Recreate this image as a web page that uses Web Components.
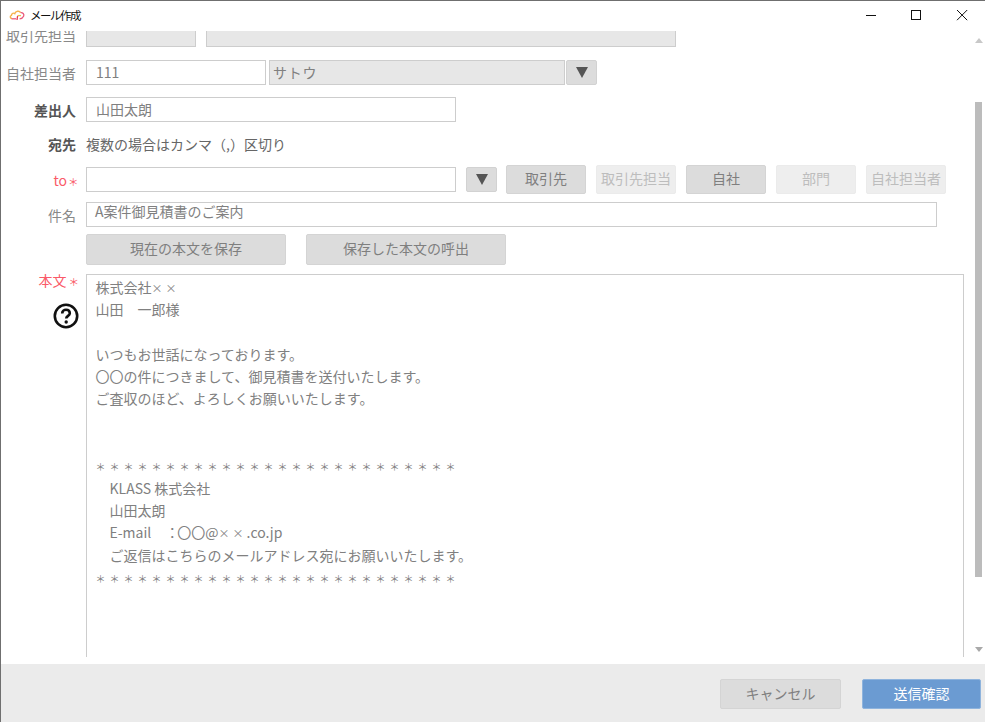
<!DOCTYPE html>
<html lang="ja">
<head>
<meta charset="utf-8">
<title>メール作成</title>
<style>
  html, body { margin: 0; height: 100%; overflow: hidden; }
  body {
    font-family: "Noto Sans CJK JP", "Noto Sans", sans-serif;
    font-size: 14px;
    color: #808080;
  }
  body-field div { min-height: 22.3px; }
  .stars { font-size: 10px; letter-spacing: 4px; line-height: 1; }
  .cross { font-size: 11px; letter-spacing: 3px; line-height: 1; }
  .colon { letter-spacing: -2px; }
  .req-mark { font-size: 10.5px; line-height: 1; margin-left: 1px; }
</style>
</head>
<body>
<mail-window>
  <title-bar slot="title">メール作成</title-bar>

  <form-row style="margin-top: -9px">
    <span slot="label">取引先担当</span>
    <text-field style="width: 110px" disabled></text-field>
    <text-field style="width: 470px; margin-left: 10px" disabled></text-field>
  </form-row>

  <form-row style="margin-top: 13px">
    <span slot="label">自社担当者</span>
    <text-field style="width: 180px">111</text-field>
    <text-field style="width: 296px; margin-left: 3px" disabled compact>サトウ</text-field>
    <drop-arrow style="margin-left: 1px"></drop-arrow>
  </form-row>

  <form-row style="margin-top: 12px">
    <span slot="label" style="font-weight: 700; color: #555">差出人</span>
    <text-field style="width: 370px">山田太朗</text-field>
  </form-row>

  <form-row style="margin-top: 12px; height: 22px">
    <span slot="label" style="display: block; margin-bottom: 2px; font-weight: 700; color: #555">宛先</span>
    <span style="color: #666; line-height: 20px; padding-bottom: 2px">複数の場合はカンマ（,）区切り</span>
  </form-row>

  <form-row style="margin-top: 9px">
    <span slot="label" style="color: #fa5a68; margin-right: -2.5px">to<span class="req-mark">＊</span></span>
    <text-field style="width: 370px"></text-field>
    <drop-arrow style="margin-left: 10px"></drop-arrow>
    <div style="display: flex; gap: 10px; margin-left: 9px">
      <flat-button style="width: 80px">取引先</flat-button>
      <flat-button style="width: 80px" disabled>取引先担当</flat-button>
      <flat-button style="width: 80px">自社</flat-button>
      <flat-button style="width: 80px" disabled>部門</flat-button>
      <flat-button style="width: 80px" disabled>自社担当者</flat-button>
    </div>
  </form-row>

  <form-row style="margin-top: 8px">
    <span slot="label">件名</span>
    <text-field style="width: 851px" top>A案件御見積書のご案内</text-field>
  </form-row>

  <form-row style="margin-top: 7px; height: 31px">
    <flat-button style="width: 200px; height: 31px">現在の本文を保存</flat-button>
    <flat-button style="width: 200px; height: 31px; margin-left: 20px">保存した本文の呼出</flat-button>
  </form-row>

  <body-field style="margin-top: 9px">
    <div>株式会社<span class="cross">××</span></div>
    <div>山田　一郎様</div>
    <div></div>
    <div>いつもお世話になっております。</div>
    <div>〇〇の件につきまして、御見積書を送付いたします。</div>
    <div>ご査収のほど、よろしくお願いいたします。</div>
    <div></div>
    <div></div>
    <div><span class="stars">＊＊＊＊＊＊＊＊＊＊＊＊＊＊＊＊＊＊＊＊＊＊＊＊＊＊</span></div>
    <div>　KLASS 株式会社</div>
    <div>　山田太朗</div>
    <div>　E-mail　<span class="colon">：</span>〇〇@<span class="cross">××</span>.co.jp</div>
    <div>　ご返信はこちらのメールアドレス宛にお願いいたします。</div>
    <div><span class="stars">＊＊＊＊＊＊＊＊＊＊＊＊＊＊＊＊＊＊＊＊＊＊＊＊＊＊</span></div>
  </body-field>

  <mail-footer slot="footer">
    <flat-button style="width: 121px; height: 30px">キャンセル</flat-button>
    <flat-button style="width: 119px; height: 30px" primary>送信確認</flat-button>
  </mail-footer>
</mail-window>

<script>
class MailWindow extends HTMLElement {
  connectedCallback() {
    this.attachShadow({ mode: 'open' });
    this.shadowRoot.innerHTML = `
      <style>
        :host {
          display: flex;
          flex-direction: column;
          box-sizing: border-box;
          width: 985px;
          height: 722px;
          background: #fff;
          border-top: 1px solid #6f6f6f;
          border-left: 1px solid #6f6f6f;
        }
        .middle { flex: 1; display: flex; min-height: 0; }
        .scroller { flex: 1; min-width: 0; overflow: hidden; }
        .rail {
          flex: none;
          width: 11px;
          margin-right: 1px;
          display: flex;
          flex-direction: column;
          align-items: center;
        }
        .thumb { width: 7px; height: 475px; margin-top: 59px; background: #bcbcbc; }
        .up, .down { width: 0; height: 0; border-left: 4px solid transparent; border-right: 4px solid transparent; }
        .up { margin-top: 7px; border-bottom: 5px solid #c8c8c8; }
        .down { margin-top: 70px; border-top: 5px solid #a9a9a9; }
      </style>
      <slot name="title"></slot>
      <div class="middle">
        <div class="scroller"><slot></slot></div>
        <div class="rail">
          <div class="up"></div>
          <div class="thumb"></div>
          <div class="down"></div>
        </div>
      </div>
      <slot name="footer"></slot>
    `;
  }
}

class TitleBar extends HTMLElement {
  connectedCallback() {
    this.attachShadow({ mode: 'open' });
    this.shadowRoot.innerHTML = `
      <style>
        :host {
          display: flex;
          align-items: center;
          flex: none;
          box-sizing: border-box;
          height: 30px;
          padding-bottom: 2px;
          font-size: 11.5px;
          color: #111;
        }
        .logo { margin: 0 4px 0 8px; }
        .name { flex: 1; letter-spacing: -1.5px; }
        .ctl { display: flex; margin-right: 17px; }
        .ctl svg { display: block; }
      </style>
      <svg class="logo" width="17" height="12" viewBox="0 0 17 12" fill="none">
        <path d="M3 9.5C1 9.5.6 7 2.4 6.4 2.6 4.4 4.6 3.6 5.8 4.6 6.6 2 10.4 1.4 11.6 3.6" stroke="#f6b24c" stroke-width="1.4"/>
        <path d="M2.6 9.8H7" stroke="#ea5a7c" stroke-width="1.3"/>
        <path d="M11.6 3.6C13.6 3.2 15.6 5.2 14.6 7.2 14 8.6 12.6 9.6 10.6 9.8" stroke="#ea5a7c" stroke-width="1.3"/>
        <path d="M8.4 6.6H12" stroke="#e8c24a" stroke-width="1.3"/>
        <path d="M8.6 7 8 11" stroke="#e8384f" stroke-width="1.3"/>
      </svg>
      <span class="name"><slot></slot></span>
      <div class="ctl">
        <svg width="12" height="12" viewBox="0 0 12 12"><path d="M1 6.5H11" stroke="#111" fill="none"/></svg>
        <svg width="12" height="12" viewBox="0 0 12 12" style="margin-left:33px"><rect x="1.5" y="1.5" width="9" height="9" stroke="#111" fill="none"/></svg>
        <svg width="12" height="12" viewBox="0 0 12 12" style="margin-left:34px"><path d="M1 1 11.2 11.2M11.2 1 1 11.2" stroke="#111" fill="none"/></svg>
      </div>
    `;
  }
}

class FormRow extends HTMLElement {
  connectedCallback() {
    this.attachShadow({ mode: 'open' });
    this.shadowRoot.innerHTML = `
      <style>
        :host { display: flex; align-items: center; }
        .label {
          flex: none;
          box-sizing: border-box;
          width: 85px;
          padding-right: 10px;
          text-align: right;
          white-space: nowrap;
          color: #888;
        }
        .fields { display: flex; align-items: center; }
      </style>
      <div class="label"><slot name="label"></slot></div>
      <div class="fields"><slot></slot></div>
    `;
  }
}

class TextField extends HTMLElement {
  connectedCallback() {
    this.attachShadow({ mode: 'open' });
    this.shadowRoot.innerHTML = `
      <style>
        :host {
          display: flex;
          align-items: center;
          flex: none;
          box-sizing: border-box;
          height: 25px;
          padding: 0 9px 1px;
          background: #fff;
          border: 1px solid #cdcdcd;
          color: #808080;
        }
        :host([disabled]) { background: #e7e7e7; }
        :host([compact]) { padding-left: 3px; letter-spacing: 0.8px; }
        :host([top]) { align-items: flex-start; line-height: 17px; padding-left: 8px; }
      </style>
      <slot></slot>
    `;
  }
}

class DropArrow extends HTMLElement {
  connectedCallback() {
    this.attachShadow({ mode: 'open' });
    this.shadowRoot.innerHTML = `
      <style>
        :host {
          display: flex;
          align-items: center;
          justify-content: center;
          flex: none;
          box-sizing: border-box;
          width: 31px;
          height: 25px;
          background: #dcdcdc;
          border: 1px solid #d2d2d2;
          border-radius: 2px;
        }
        i { width: 0; height: 0; border-left: 6px solid transparent; border-right: 6px solid transparent; border-top: 11px solid #555; }
      </style>
      <i></i>
    `;
  }
}

class FlatButton extends HTMLElement {
  connectedCallback() {
    this.attachShadow({ mode: 'open' });
    this.shadowRoot.innerHTML = `
      <style>
        :host {
          display: flex;
          align-items: center;
          justify-content: center;
          flex: none;
          box-sizing: border-box;
          height: 29px;
          padding-bottom: 3px;
          background: #dcdcdc;
          border: 1px solid #d4d4d4;
          border-radius: 2px;
          color: #7f7f7f;
          white-space: nowrap;
        }
        :host([disabled]) { background: #eeeeee; border-color: #ebebeb; color: #bdbdbd; }
        :host([primary]) { background: #6b9bd2; border-color: #8fb4dd; color: #fff; }
      </style>
      <slot></slot>
    `;
  }
}

class BodyField extends HTMLElement {
  connectedCallback() {
    this.attachShadow({ mode: 'open' });
    this.shadowRoot.innerHTML = `
      <style>
        :host { display: flex; align-items: flex-start; }
        .side {
          flex: none;
          box-sizing: border-box;
          width: 85px;
          padding-right: 7px;
          display: flex;
          flex-direction: column;
          align-items: flex-end;
        }
        .req { color: #fa5a68; line-height: 14px; margin-top: -1px; white-space: nowrap; }
        .req span { font-size: 10.5px; line-height: 1; margin-left: 2px; }
        .help { margin-top: 15px; display: block; }
        .box {
          box-sizing: border-box;
          width: 878px;
          height: 383px;
          padding: 1px 9px 0 8.5px;
          border: 1px solid #cdcdcd;
          border-bottom: 0;
          overflow: hidden;
          line-height: 22.3px;
          color: #808080;
        }
      </style>
      <div class="side">
        <span class="req">本文<span>＊</span></span>
        <svg class="help" width="26" height="26" viewBox="0 0 26 26">
          <circle cx="13" cy="13" r="11.2" fill="none" stroke="#111" stroke-width="2.6"/>
          <path d="M9.2 10.4C9.2 8 11 6.8 13 6.8s3.8 1.2 3.8 3.4c0 2.7-3.6 2.6-3.6 5.4" fill="none" stroke="#111" stroke-width="2.6"/>
          <circle cx="13.2" cy="19" r="1.7" fill="#111"/>
        </svg>
      </div>
      <div class="box"><slot></slot></div>
    `;
  }
}

class MailFooter extends HTMLElement {
  connectedCallback() {
    this.attachShadow({ mode: 'open' });
    this.shadowRoot.innerHTML = `
      <style>
        :host {
          display: flex;
          align-items: center;
          justify-content: flex-end;
          flex: none;
          gap: 21px;
          height: 58px;
          padding: 2px 4px 0 0;
          box-sizing: border-box;
          background: #ebebeb;
        }
      </style>
      <slot></slot>
    `;
  }
}

customElements.define('text-field', TextField);
customElements.define('drop-arrow', DropArrow);
customElements.define('flat-button', FlatButton);
customElements.define('form-row', FormRow);
customElements.define('body-field', BodyField);
customElements.define('mail-footer', MailFooter);
customElements.define('title-bar', TitleBar);
customElements.define('mail-window', MailWindow);
</script>
</body>
</html>
